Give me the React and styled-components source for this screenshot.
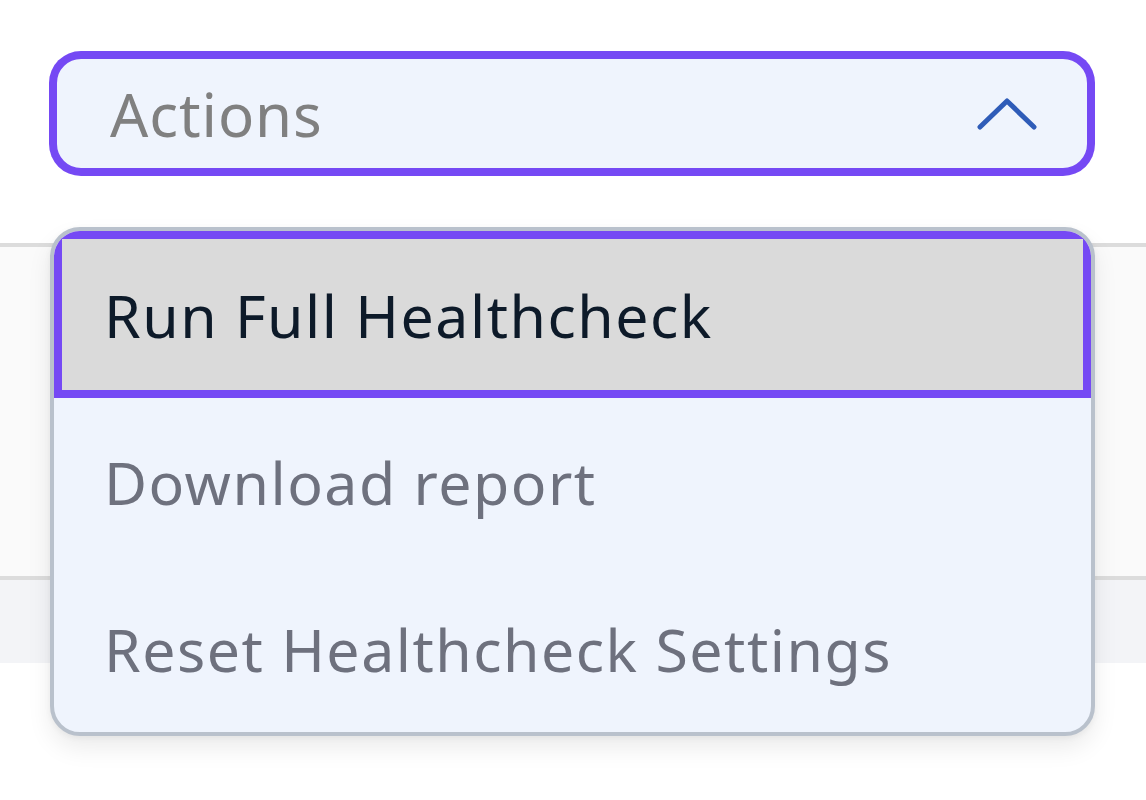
import React, { useState } from 'react';
import styled, { createGlobalStyle } from 'styled-components';

const GlobalStyle = createGlobalStyle`
    html, body {
        margin: 0;
        padding: 0;
        background: #ffffff;
        font-family: "Noto Sans", "Open Sans", sans-serif;
    }
`;

const Page = styled.div`
    position: relative;
    width: 1146px;
    height: 800px;
    overflow: hidden;
`;

const Header = styled.div`
    height: 243px;
    box-sizing: border-box;
    padding: 51px 51px 0 49px;
`;

const Trigger = styled.button`
    box-sizing: border-box;
    display: flex;
    align-items: center;
    justify-content: space-between;
    padding: 0 50px 0 53px;
    margin: 4px;
    width: 1038px;
    height: 117px;
    background: #eff4fd;
    border: 4px solid #7549f4;
    box-shadow: 0 0 0 4px #7549f4;
    border-radius: 28px;
    font-family: inherit;
    font-size: 60px;
    letter-spacing: 0.9px;
    color: #808080;
    cursor: pointer;
`;

const Chevron = () => (
    <svg width="60" height="34" viewBox="0 0 60 34" fill="none">
        <path d="M3 30 L30 4 L57 30" stroke="#2f5cb8" strokeWidth="5" strokeLinecap="round" strokeLinejoin="round" />
    </svg>
);

const Row = styled.div`
    border-top: 4px solid #dcdcdc;
    height: ${props => props.height}px;
    background: ${props => props.bg};
`;

const Menu = styled.ul`
    position: absolute;
    top: 227px;
    left: 50px;
    width: 1045px;
    box-sizing: border-box;
    margin: 0;
    padding: 0;
    list-style: none;
    background: #eff4fd;
    border: 4px solid #b9c1cc;
    border-radius: 30px;
    overflow: hidden;
    box-shadow: 0 12px 24px rgba(0, 0, 0, 0.08), 0 2px 6px rgba(0, 0, 0, 0.05);
`;

const Item = styled.li`
    box-sizing: border-box;
    height: 167px;
    display: flex;
    align-items: center;
    padding-left: ${props => props.active ? 42 : 50}px;
    padding-bottom: 0;
    font-size: 59px;
    letter-spacing: 1.5px;
    color: ${props => props.active ? '#0d1a29' : '#6e717e'};
    background: ${props => props.active ? '#dadada' : 'transparent'};
    border: ${props => props.active ? '8px solid #7549f4' : 'none'};
    cursor: pointer;
`;

const items = ['Run Full Healthcheck', 'Download report', 'Reset Healthcheck Settings'];

export default function App() {
    const [active, setActive] = useState(0);
    return <Page>
        <GlobalStyle />
        <Header>
            <Trigger>
                <span>Actions</span>
                <Chevron />
            </Trigger>
        </Header>
        <Row height={329} bg="#fafafa" />
        <Row height={83} bg="#f3f4f7" />
        <Menu>
            {items.map((label, index) => (
                <Item key={label} active={index === active} onMouseEnter={() => setActive(index)}>
                    {label}
                </Item>
            ))}
        </Menu>
    </Page>;
}
